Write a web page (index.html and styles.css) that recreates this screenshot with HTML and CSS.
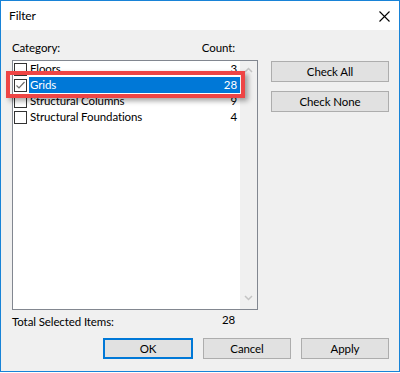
FILE: index.html
```html
<!DOCTYPE html>
<html>
<head>
<meta charset="utf-8">
<link rel="stylesheet" href="styles.css">
</head>
<body>
<div class="window">
  <div class="titlebar">
    <span class="title">Filter</span>
    <svg class="close" width="11" height="11" viewBox="0 0 11 11"><path d="M0.5 0.5 L10.5 10.5 M10.5 0.5 L0.5 10.5" stroke="#000" stroke-width="1.1" fill="none"/></svg>
  </div>
  <div class="content">
    <div class="main">
      <div class="left">
        <div class="header"><span>Category:</span><span>Count:</span></div>
        <div class="listbox">
          <div class="items">
            <div class="row"><span class="cb"></span><span class="label"><span>Floors</span><span>3</span></span></div>
            <div class="row"><span class="cb checked"><svg width="11" height="11" viewBox="0 0 11 11"><path d="M1.5 5.5 L4 8 L9.5 2" stroke="#6d6d6d" stroke-width="1.2" fill="none"/></svg></span><span class="label sel"><span>Grids</span><span>28</span></span></div>
            <div class="row"><span class="cb"></span><span class="label"><span>Structural Columns</span><span>9</span></span></div>
            <div class="row"><span class="cb"></span><span class="label"><span>Structural Foundations</span><span>4</span></span></div>
          </div>
          <div class="scrollbar">
            <svg width="9" height="6" viewBox="0 0 9 6"><path d="M1 5 L4.5 1.5 L8 5" stroke="#c4c4c4" stroke-width="1.5" fill="none"/></svg>
            <svg width="9" height="6" viewBox="0 0 9 6"><path d="M1 1 L4.5 4.5 L8 1" stroke="#c4c4c4" stroke-width="1.5" fill="none"/></svg>
          </div>
          <div class="highlight"></div>
        </div>
        <div class="total"><span class="tl">Total Selected Items:</span><span class="num">28</span></div>
      </div>
      <div class="right">
        <div class="btn wide">Check All</div>
        <div class="btn wide">Check None</div>
      </div>
    </div>
    <div class="footer">
      <div class="btn ok">OK</div>
      <div class="btn">Cancel</div>
      <div class="btn">Apply</div>
    </div>
  </div>
</div>
</body>
</html>
```

FILE: styles.css
```css
* { box-sizing: border-box; }
html, body { margin: 0; padding: 0; background: #fff; }
body {
  font-family: Lato, "Noto Sans", sans-serif;
  font-size: 11.5px;
  letter-spacing: -0.1px;
  color: #000;
}
.window {
  width: 400px;
  height: 372px;
  border: 1px solid #1883d7;
  display: flex;
  flex-direction: column;
  background: #f0f0f0;
}
.titlebar {
  height: 29px;
  background: #fff;
  display: flex;
  align-items: center;
  justify-content: space-between;
  padding: 0 9px 0 8px;
  flex: none;
}
.title { line-height: 16px; font-size: 12px; }
.close { margin-top: 1px; }
.content {
  flex: 1;
  display: flex;
  flex-direction: column;
  padding: 10px 10px 0 11px;
}
.main {
  display: flex;
  gap: 13px;
}
.left { width: 246px; }
.header {
  display: flex;
  justify-content: space-between;
  height: 16px;
  line-height: 16px;
  padding-right: 23px;
  margin-bottom: 4px;
}
.listbox {
  position: relative;
  height: 250px;
  border: 1px solid #828790;
  background: #fff;
  display: flex;
}
.items { flex: 1; }
.row {
  display: flex;
  height: 16px;
  line-height: 16px;
}
.cb {
  width: 13px;
  height: 13px;
  border: 1px solid #333;
  background: #fff;
  margin: 2px 2px 1px 1px;
  flex: none;
  display: flex;
  align-items: center;
  justify-content: center;
}
.label {
  flex: 1;
  display: flex;
  justify-content: space-between;
  padding: 0 3px 0 1px;
}
.label.sel { background: #0078d7; color: #fff; }
.scrollbar {
  width: 17px;
  background: #f0f0f0;
  display: flex;
  flex-direction: column;
  justify-content: space-between;
  align-items: center;
  padding: 6px 0 8px;
}
.highlight {
  position: absolute;
  left: -7px;
  top: 10px;
  width: 239px;
  height: 27px;
  border: 4px solid #ee4545;
  box-shadow: 3px 3px 5px rgba(0,0,0,0.35);
}
.total {
  display: flex;
  height: 16px;
  line-height: 16px;
  margin-top: 4px;
}
.total .tl { width: 210px; }
.total .num { position: relative; top: -2px; }
.right {
  width: 118px;
  padding-top: 21px;
  display: flex;
  flex-direction: column;
  gap: 9px;
}
.btn {
  height: 21px;
  background: #e1e1e1;
  border: 1px solid #adadad;
  display: flex;
  align-items: center;
  justify-content: center;
  line-height: 16px;
}
.footer {
  display: flex;
  justify-content: flex-end;
  gap: 10px;
  margin-top: 8px;
}
.footer .btn { width: 88px; }
.footer .btn.ok { border: 2px solid #0078d7; width: 90px; }
```
